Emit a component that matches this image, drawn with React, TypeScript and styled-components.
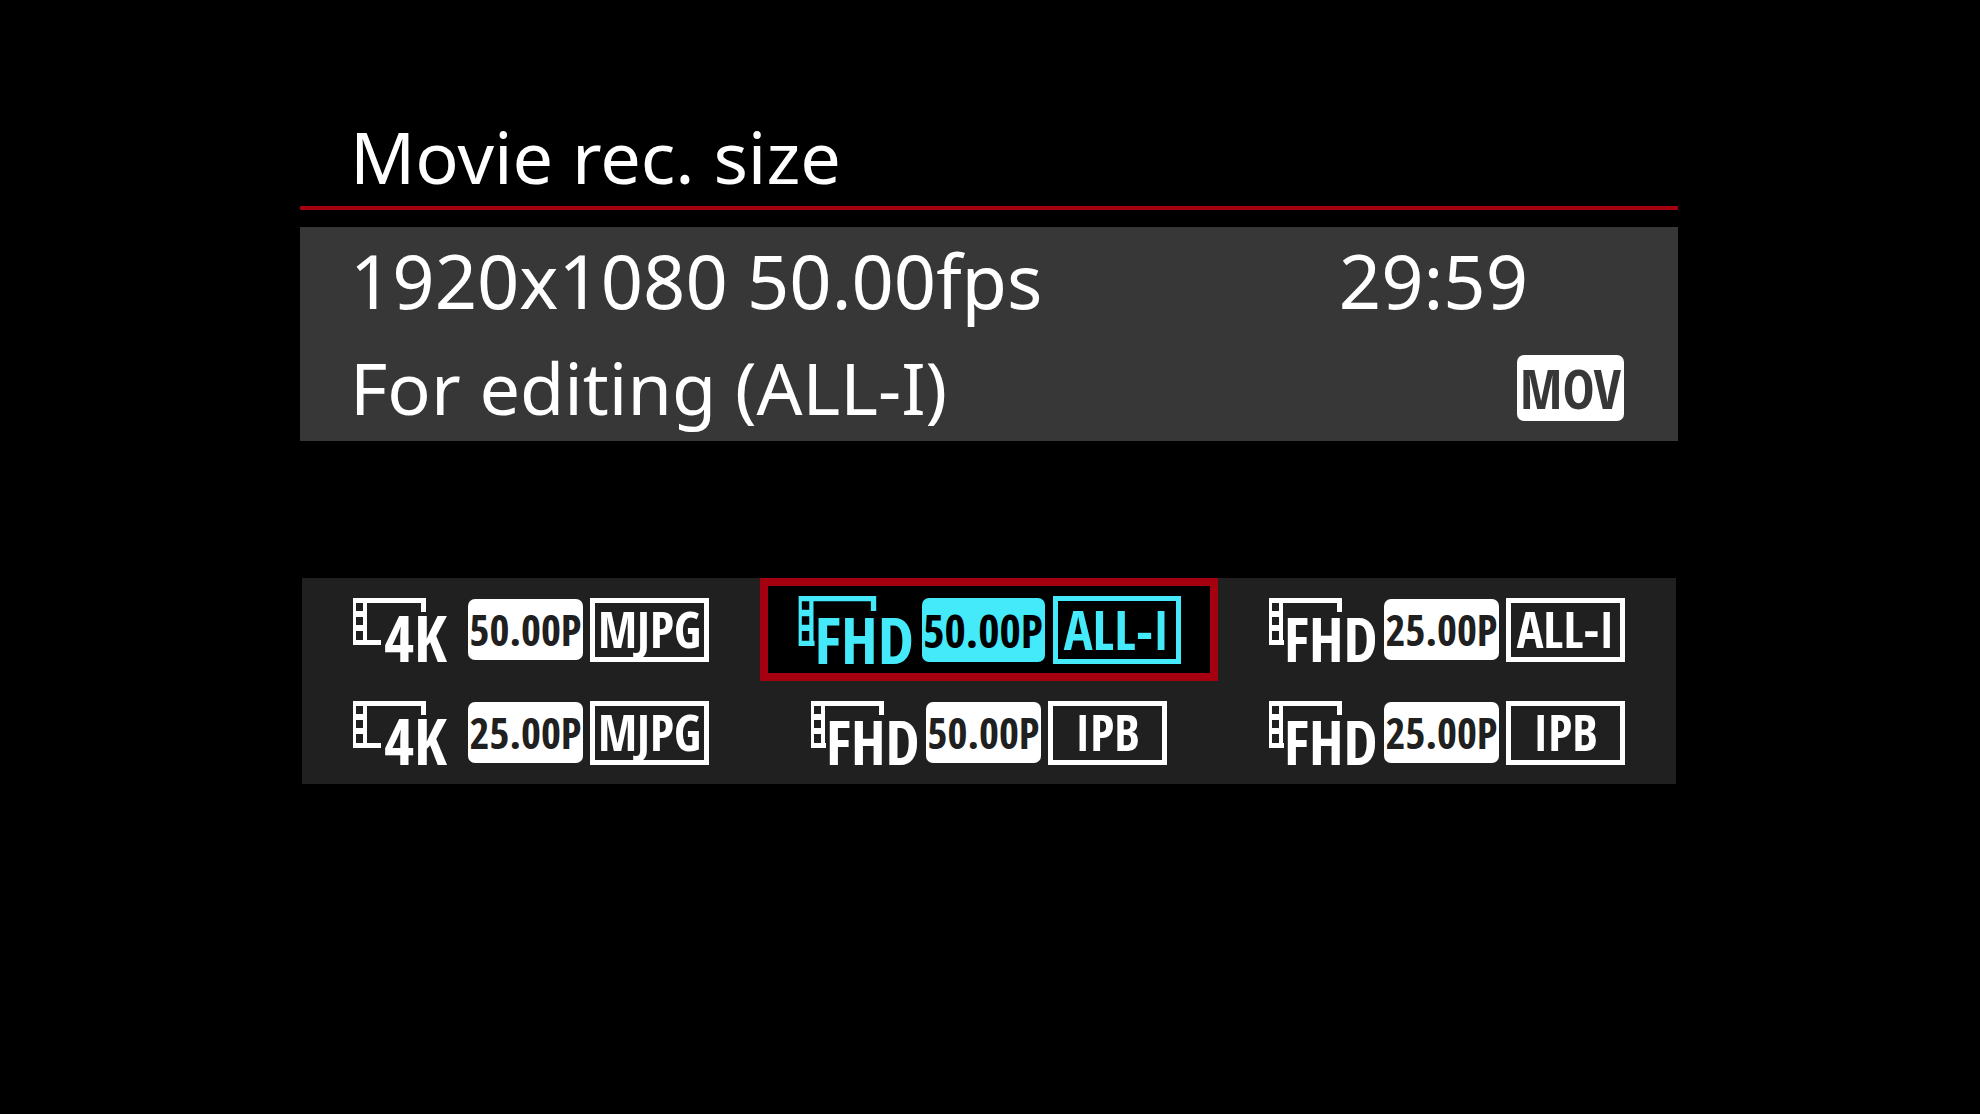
import React, { useState } from "react";
import styled, { createGlobalStyle } from "styled-components";

const color = {
  page: "#000000",
  info: "#373737",
  options: "#202020",
  text: "#ffffff",
  active: "#44e9fa",
  accent: "#a40010",
};

const condensed = `"Open Sans Condensed", "Roboto Condensed", "Noto Sans", sans-serif`;

const GlobalStyle = createGlobalStyle`
  *, *::before, *::after { box-sizing: border-box; }
  body {
    margin: 0;
    padding-right: 2px;
    background: ${color.page};
    color: ${color.text};
    font-family: "Noto Sans", "Open Sans", sans-serif;
  }
`;

const Screen = styled.main`
  width: 100%;
  max-width: 1378px;
  min-height: 100vh;
  margin: 0 auto;
  padding: 107px 0;
`;

const Header = styled.header`
  padding: 0 50px;
  border-bottom: 4px solid ${color.accent};
`;

const Title = styled.h1`
  margin: 0;
  font-size: 72px;
  font-weight: 400;
  line-height: 99px;
`;

const Info = styled.section`
  margin-top: 17px;
  padding: 0 54px 0 50px;
  background: ${color.info};
`;

const InfoRow = styled.div`
  display: flex;
  align-items: center;
  justify-content: space-between;
`;

const InfoText = styled.p<{ $numeric?: boolean }>`
  margin: 0;
  font-size: ${(p) => (p.$numeric ? 74 : 72)}px;
  line-height: 107px;
  white-space: nowrap;
`;

const Remaining = styled(InfoText)`
  margin-right: 96px;
`;

const FormatBadge = styled.span`
  width: 107px;
  border-radius: 7px;
  background: ${color.text};
  color: ${color.info};
  font: 700 54px/66px ${condensed};
  text-align: center;
`;

const Options = styled.div`
  display: grid;
  grid-template-columns: repeat(3, 1fr);
  margin: 137px 2px 0;
  background: ${color.options};
`;

const Option = styled.button<{ $active: boolean }>`
  display: flex;
  align-items: center;
  justify-content: center;
  gap: ${(p) => (p.$active ? 8 : 7)}px;
  height: 103px;
  padding: 0;
  border: 8px solid ${(p) => (p.$active ? color.accent : "transparent")};
  background: ${(p) => (p.$active ? color.page : "transparent")};
  color: ${(p) => (p.$active ? color.active : color.text)};
  cursor: pointer;
`;

const SizeIcon = styled.svg<{ $active: boolean }>`
  display: block;
  flex: none;
  width: ${(p) => (p.$active ? 116 : 108)}px;
  height: ${(p) => (p.$active ? 68 : 64)}px;
  overflow: visible;
  fill: currentColor;
`;

const IconText = styled.text<{ $size: number }>`
  font: 700 ${(p) => p.$size}px ${condensed};
`;

const Rate = styled.span<{ $active: boolean }>`
  width: ${(p) => (p.$active ? 123 : 115)}px;
  border-radius: 7px;
  background: ${(p) => (p.$active ? color.active : color.text)};
  color: ${(p) => (p.$active ? color.page : color.options)};
  font: 700 ${(p) => (p.$active ? 46 : 43)}px/${(p) => (p.$active ? 64 : 61)}px ${condensed};
  text-align: center;
`;

const Codec = styled.span<{ $active: boolean }>`
  width: ${(p) => (p.$active ? 128 : 119)}px;
  height: ${(p) => (p.$active ? 68 : 64)}px;
  border: 5px solid currentColor;
  font: 700 ${(p) => (p.$active ? 54 : 50)}px/${(p) => (p.$active ? 56 : 52)}px ${condensed};
  text-align: center;
`;

type Size = "4K" | "FHD";

function MovieSize({ size, active }: { size: Size; active: boolean }) {
  const is4K = size === "4K";
  return (
    <SizeIcon $active={active} viewBox="0 0 108 64">
      <path
        fillRule="evenodd"
        d={`M0 0H73V14H68V5H14V42H${is4K ? 28 : 15}V47H0ZM3 5V13H10V5ZM3 19V27H10V19ZM3 33V42H10V33Z`}
      />
      <IconText $size={is4K ? 65 : 61} x={is4K ? 31 : 15} y={64}>
        {size}
      </IconText>
    </SizeIcon>
  );
}

const modes: { size: Size; rate: string; codec: string }[] = [
  { size: "4K", rate: "50.00P", codec: "MJPG" },
  { size: "FHD", rate: "50.00P", codec: "ALL-I" },
  { size: "FHD", rate: "25.00P", codec: "ALL-I" },
  { size: "4K", rate: "25.00P", codec: "MJPG" },
  { size: "FHD", rate: "50.00P", codec: "IPB" },
  { size: "FHD", rate: "25.00P", codec: "IPB" },
];

export default function App() {
  const [selected, setSelected] = useState(1);
  return (
    <Screen>
      <GlobalStyle />
      <Header>
        <Title>Movie rec. size</Title>
      </Header>
      <Info>
        <InfoRow>
          <InfoText $numeric>1920x1080 50.00fps</InfoText>
          <Remaining $numeric>29:59</Remaining>
        </InfoRow>
        <InfoRow>
          <InfoText>For editing (ALL-I)</InfoText>
          <FormatBadge>MOV</FormatBadge>
        </InfoRow>
      </Info>
      <Options>
        {modes.map((mode, i) => {
          const active = i === selected;
          return (
            <Option
              key={mode.size + mode.rate + mode.codec}
              type="button"
              $active={active}
              aria-pressed={active}
              onClick={() => setSelected(i)}
            >
              <MovieSize size={mode.size} active={active} />
              <Rate $active={active}>{mode.rate}</Rate>
              <Codec $active={active}>{mode.codec}</Codec>
            </Option>
          );
        })}
      </Options>
    </Screen>
  );
}
